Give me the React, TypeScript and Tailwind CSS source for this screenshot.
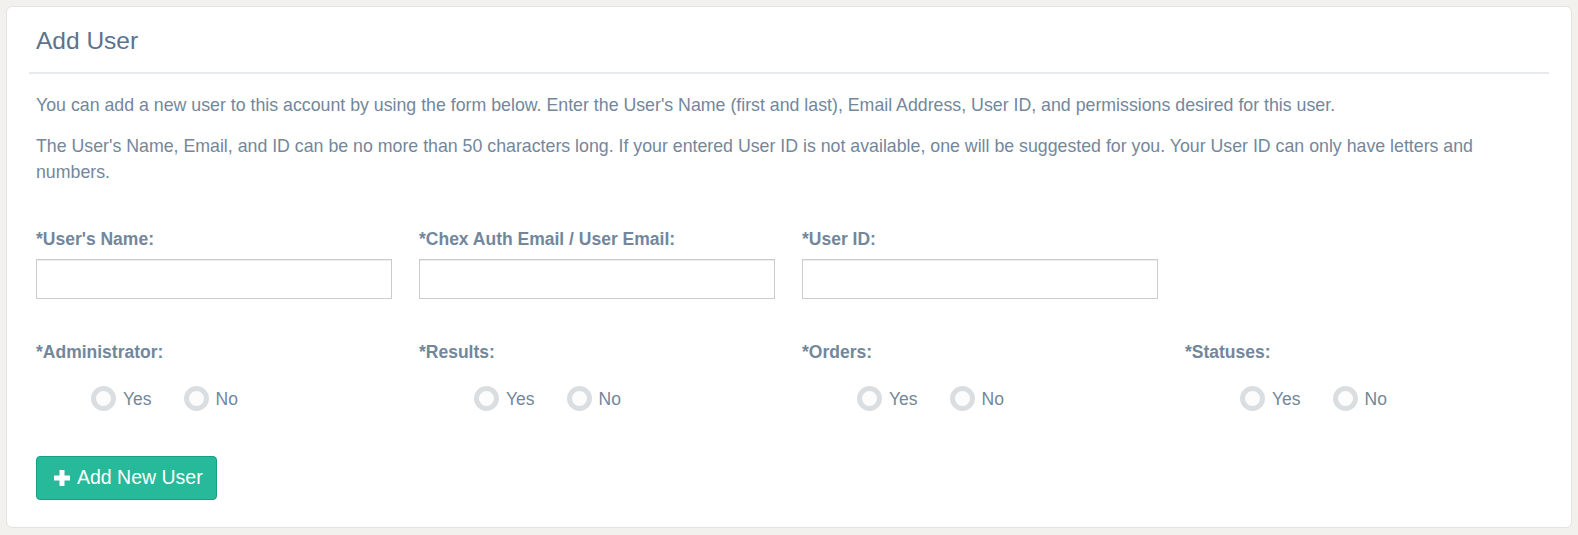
import React from "react";

const F = { fontFamily: '"Liberation Sans", Arial, sans-serif' };

function Radio({ label }: { label: string }) {
  return (
    <label className="flex items-center gap-[7px]">
      <span className="block w-[25px] h-[25px] rounded-full border-[5px] border-[#dadee1] bg-[#fcfcfc]" />
      <span className="text-[17.5px] leading-[24px] text-[#73879c]">{label}</span>
    </label>
  );
}

function RadioGroup({ title }: { title: string }) {
  return (
    <div>
      <div className="text-[17.5px] leading-[20px] font-bold text-[#73879c]">{title}</div>
      <div className="mt-[24px] pl-[55px] flex items-center gap-[32px]">
        <Radio label="Yes" />
        <Radio label="No" />
      </div>
    </div>
  );
}

function Field({ title }: { title: string }) {
  return (
    <div>
      <div className="text-[17.5px] leading-[20px] font-bold text-[#73879c]">{title}</div>
      <input
        type="text"
        className="mt-[10px] block w-full h-[40px] border border-[#cccccc] bg-white shadow-[inset_0_1px_1px_rgba(0,0,0,0.075)] outline-none"
      />
    </div>
  );
}

export default function App() {
  return (
    <div className="min-h-[535px] bg-[#f2f1ee] p-[6px]" style={F}>
      <div className="bg-white border border-[#e3e3e0] rounded-[6px] px-[22px] pt-[19px] pb-[29px] h-[522px]">
        <div className="border-b-2 border-[#e6e9ed] pl-[7px] pb-[16px]">
          <h2 className="text-[24.5px] leading-[30px] text-[#5a738e]">Add User</h2>
        </div>
        <div className="pl-[7px] pr-[7px]">
          <p className="mt-[18px] text-[17.75px] leading-[26px] text-[#73879c]">
            You can add a new user to this account by using the form below. Enter the User's Name (first and last), Email Address, User ID, and permissions desired for this user.
          </p>
          <p className="mt-[15px] text-[17.75px] leading-[26px] text-[#73879c]">
            The User's Name, Email, and ID can be no more than 50 characters long. If your entered User ID is not available, one will be suggested for you. Your User ID can only have letters and numbers.
          </p>
          <div className="mt-[44px] grid grid-cols-[356px_356px_356px_356px] gap-x-[27px]">
            <Field title="*User's Name:" />
            <Field title="*Chex Auth Email / User Email:" />
            <Field title="*User ID:" />
            <div />
          </div>
          <div className="mt-[43px] grid grid-cols-[356px_356px_356px_356px] gap-x-[27px]">
            <RadioGroup title="*Administrator:" />
            <RadioGroup title="*Results:" />
            <RadioGroup title="*Orders:" />
            <RadioGroup title="*Statuses:" />
          </div>
          <button className="mt-[45px] flex items-center gap-[7px] h-[44px] w-[181px] pl-[17px] rounded-[4px] bg-[#26b99a] border border-[#169f85] text-white text-[19.5px]">
            <svg width="16" height="16" viewBox="0 0 16 16" fill="white">
              <rect x="5.5" y="0" width="5" height="16" rx="0.5" />
              <rect x="0" y="5.5" width="16" height="5" rx="0.5" />
            </svg>
            <span>Add New User</span>
          </button>
        </div>
      </div>
    </div>
  );
}
